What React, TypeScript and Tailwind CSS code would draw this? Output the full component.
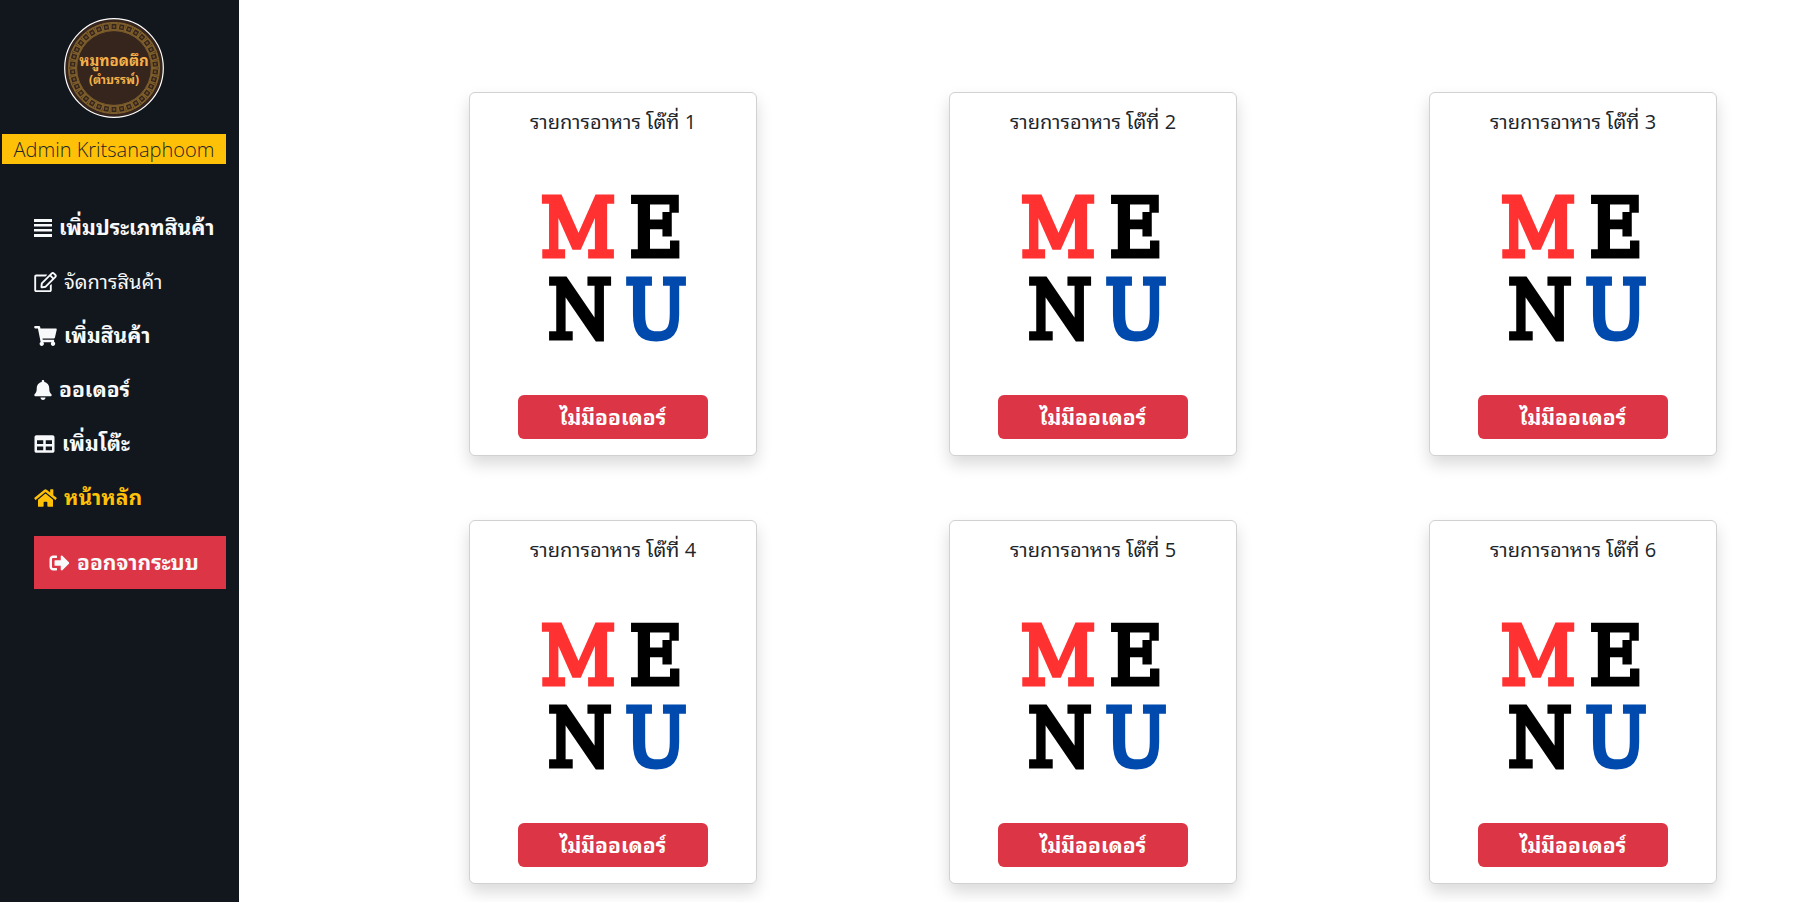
import React from 'react';
import { FaBell, FaHome, FaRegEdit, FaShoppingCart, FaSignOutAlt, FaTable } from 'react-icons/fa';

const ListIcon = () => (
  <svg viewBox="0 0 18 20" className="h-5 w-[18px] shrink-0" fill="currentColor">
    <path d="M0 1h18v3H0zM0 6h18v2.6H0zM0 11h18v2.6H0zM0 16h18v3H0z" />
  </svg>
);

const menuItems = [
  { label: 'เพิ่มประเภทสินค้า', icon: <ListIcon />, style: 'font-bold text-[21px] text-[#f8f9fa]' },
  { label: 'จัดการสินค้า', icon: <FaRegEdit className="h-5 w-[23px] shrink-0" />, style: 'text-xl text-[#f8f9fa]' },
  { label: 'เพิ่มสินค้า', icon: <FaShoppingCart className="h-5 w-[23px] shrink-0" />, style: 'font-bold text-[21px] text-[#f8f9fa]' },
  { label: 'ออเดอร์', icon: <FaBell className="h-5 w-[18px] shrink-0" />, style: 'font-bold text-[21px] text-[#f8f9fa]' },
  { label: 'เพิ่มโต๊ะ', icon: <FaTable className="h-5 w-[21px] shrink-0" />, style: 'font-bold text-[21px] text-[#f8f9fa]' },
  { label: 'หน้าหลัก', icon: <FaHome className="h-5 w-[23px] shrink-0" />, style: 'font-bold text-[21px] text-[#ffc107]' },
];

const tables = [1, 2, 3, 4, 5, 6];

const Logo = () => (
  <svg viewBox="0 0 100 100" className="size-25" role="img" aria-label="หมูทอดตึก">
    <circle cx="50" cy="50" r="49.3" fill="#35251c" stroke="#fff" strokeWidth="1.2" />
    <circle cx="50" cy="50" r="45.6" fill="none" stroke="#80602c" strokeWidth="1" />
    <circle cx="50" cy="50" r="37.4" fill="none" stroke="#80602c" strokeWidth="1" />
    {Array.from({ length: 34 }, (_, i) => (
      <g key={i} transform={`rotate(${(i * 360) / 34} 50 50)`}>
        <rect x="46.9" y="5.2" width="6.2" height="6.6" fill="none" stroke="#80602c" strokeWidth="1.4" />
        <rect x="48.8" y="7.4" width="2.4" height="2.4" fill="#6b4f27" />
      </g>
    ))}
    <text x="50" y="48" textAnchor="middle" fontSize="15" fontWeight="700" fill="#f5b04a">หมูทอดตึก</text>
    <text x="50" y="66" textAnchor="middle" fontSize="12" fontWeight="700" fill="#f5b04a">(ตำบรรพ์)</text>
  </svg>
);

// the stroke thickens the serifs into slabs
const MenuArt = () => (
  <svg
    viewBox="0 0 190 240"
    className="h-60 w-full"
    fontFamily="'DejaVu Serif Condensed', 'DejaVu Serif', serif"
    fontSize="81"
    textAnchor="middle"
    strokeWidth="5"
  >
    <text x="60" y="111" fill="#ff3131" stroke="#ff3131">M</text>
    <text x="138" y="111" fill="#000" stroke="#000">E</text>
    <text x="62" y="193" fill="#000" stroke="#000">N</text>
    <text x="138" y="193" fill="#004aad" stroke="#004aad">U</text>
  </svg>
);

const Sidebar = () => (
  <aside className="w-[239px] shrink-0 bg-[#12171e] pt-[18px]">
    <div className="flex justify-center pr-3">
      <Logo />
    </div>
    <div className="mt-4 mr-[13px] ml-0.5 bg-[#ffc107] pt-0.5 text-center text-xl leading-7 font-light text-[#212529]">
      Admin Kritsanaphoom
    </div>
    <nav className="mt-[37px] mr-[13px] ml-[34px]">
      <ul>
        {menuItems.map((item) => (
          <li key={item.label}>
            <a href="#" className={`flex h-[54px] items-center gap-[7px] whitespace-nowrap ${item.style}`}>
              {item.icon}
              <span>{item.label}</span>
            </a>
          </li>
        ))}
      </ul>
      <a href="#" className="mt-[11px] flex h-[53px] items-center gap-[7px] bg-[#dc3545] px-[15px] text-[21px] font-bold whitespace-nowrap text-[#f8f9fa]">
        <FaSignOutAlt className="h-5 w-[21px] shrink-0" />
        <span>ออกจากระบบ</span>
      </a>
    </nav>
  </aside>
);

const TableCard: React.FC<{ no: number }> = ({ no }) => (
  <div className="flex h-[364px] flex-col items-center justify-between rounded-md border border-[#d0d1d2] bg-white p-4 shadow-[0_8px_16px_rgba(0,0,0,0.15)]">
    <h5 className="text-xl leading-[26px] text-[#212529]">รายการอาหาร โต๊ที่ {no}</h5>
    <MenuArt />
    <button type="button" className="h-11 w-[190px] rounded-md bg-[#dc3545] pt-0.5 text-[21px] font-bold text-white">
      ไม่มีออเดอร์
    </button>
  </div>
);

const App = () => {
  return (
    <div className="flex min-h-screen bg-white font-['Open_Sans','Noto_Sans_Thai_Looped','Loma','Noto_Sans_Thai','Noto_Sans',sans-serif]">
      <Sidebar />
      <main className="grid flex-1 grid-cols-[repeat(3,288px)] content-start justify-between gap-y-16 pt-[92px] pr-20 pb-4 pl-[230px]">
        {tables.map((no) => (
          <TableCard key={no} no={no} />
        ))}
      </main>
    </div>
  );
};

export default App;
